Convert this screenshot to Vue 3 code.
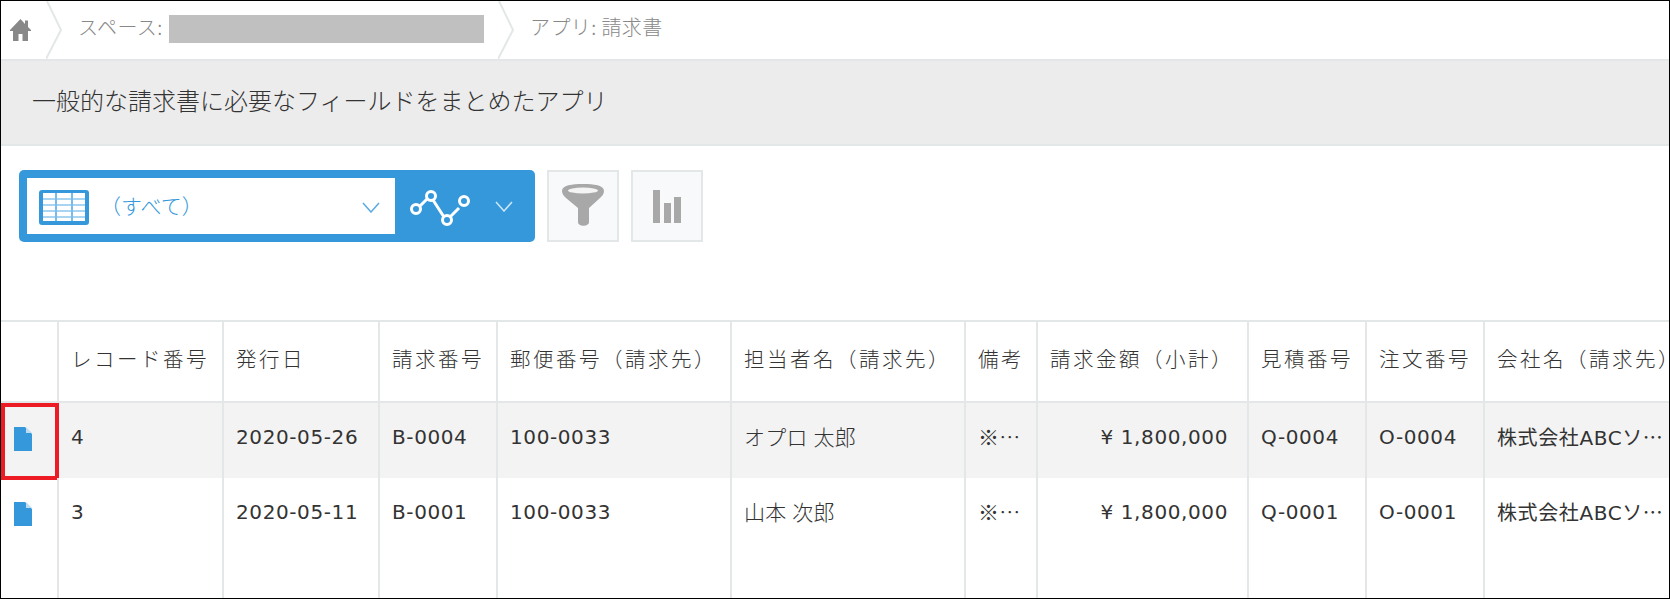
<script setup>
const heads = [
  { t: '', w: 58 }, { t: 'レコード番号', w: 165 }, { t: '発行日', w: 156 }, { t: '請求番号', w: 118 },
  { t: '郵便番号（請求先）', w: 234 }, { t: '担当者名（請求先）', w: 234 }, { t: '備考', w: 72 },
  { t: '請求金額（小計）', w: 211 }, { t: '見積番号', w: 118 }, { t: '注文番号', w: 118 }, { t: '会社名（請求先）', w: 200 }
]
const rows = [
  { id: '4', date: '2020-05-26', inv: 'B-0004', zip: '100-0033', name: 'オプロ 太郎', q: 'Q-0004', o: 'O-0004', active: true },
  { id: '3', date: '2020-05-11', inv: 'B-0001', zip: '100-0033', name: '山本 次郎', q: 'Q-0001', o: 'O-0001', active: false }
]
</script>

<template>
  <div class="frame">
    <nav class="crumbs">
      <svg class="home" viewBox="0 0 21 22" width="21" height="22"><path d="M10.5 0L0 11v1h3v10h5.5v-7h4v7H18V12h3v-1l-3-3V1.500h-3V5z" fill="#888"/></svg>
      <svg class="sep sep-a" viewBox="0 0 16 58" width="16" height="58"><path d="M1 0l14 29L0 58" fill="none" stroke="#e3e7e8" stroke-width="2"/></svg>
      <span class="crumb crumb-space">スペース:</span>
      <span class="masked"></span>
      <svg class="sep sep-b" viewBox="0 0 16 58" width="16" height="58"><path d="M1 0l14 29L0 58" fill="none" stroke="#e3e7e8" stroke-width="2"/></svg>
      <span class="crumb crumb-app">アプリ: 請求書</span>
    </nav>

    <div class="band">一般的な請求書に必要なフィールドをまとめたアプリ</div>

    <div class="toolbar">
      <div class="viewbar">
        <div class="select">
          <svg class="grid" viewBox="0 0 50 35" width="50" height="35">
            <rect width="50" height="35" rx="3" fill="#3498db"/>
            <rect x="4" y="3" width="42" height="28" fill="#fff"/>
            <g fill="#a9d5f3">
              <rect x="4" y="8" width="42" height="2"/><rect x="4" y="14" width="42" height="2"/><rect x="4" y="20" width="42" height="2"/><rect x="4" y="26" width="42" height="2"/>
            </g>
            <g fill="#79bbea">
              <rect x="16" y="3" width="2" height="28"/><rect x="32" y="3" width="2" height="28"/>
            </g>
          </svg>
          <span class="select-text">（すべて）</span>
          <svg class="chev" viewBox="0 0 18 11" width="18" height="11"><path d="M1 1l8 9 8-9" fill="none" stroke="#5aaae3" stroke-width="1.500"/></svg>
        </div>
        <svg class="graph" viewBox="0 0 62 38" width="62" height="38">
          <path d="M10 16L17 9M23 10l11 17M40 27l9-9" stroke="#fff" stroke-width="3" fill="none"/>
          <g fill="none" stroke="#fff" stroke-width="3">
            <circle cx="6" cy="19" r="4.500"/><circle cx="21" cy="6" r="4.500"/><circle cx="37" cy="30" r="4.500"/><circle cx="54" cy="11" r="4.500"/>
          </g>
        </svg>
        <svg class="chev chev-w" viewBox="0 0 18 11" width="18" height="11"><path d="M1 1l8 9 8-9" fill="none" stroke="#cfe6f7" stroke-width="1.500"/></svg>
      </div>
      <button class="tool">
        <svg class="funnel" viewBox="0 0 42 42" width="42" height="42">
          <path d="M0 7C0 1 10 0 21 0s21 1 21 7c0 3-2 5-4 7L27 24v14c0 5-11 5-11 0V24L4 14C2 12 0 10 0 7z" fill="#a8a8a8"/>
          <ellipse cx="21" cy="6.500" rx="15" ry="3" fill="#f4f4f4"/>
        </svg>
      </button>
      <button class="tool">
        <svg viewBox="0 0 28 33" width="28" height="33" class="bars">
          <rect x="0" y="0" width="7" height="33" fill="#a8a8a8"/>
          <rect x="11" y="13" width="7" height="20" fill="#a8a8a8"/>
          <rect x="21" y="7" width="7" height="26" fill="#a8a8a8"/>
        </svg>
      </button>
    </div>

    <div class="table-wrap">
      <table>
        <colgroup><col v-for="h in heads" :key="h.t" :style="{ width: h.w + 'px' }"></colgroup>
        <thead>
          <tr><th v-for="h in heads" :key="h.t">{{ h.t }}</th></tr>
        </thead>
        <tbody>
          <tr v-for="r in rows" :key="r.id" :class="{ active: r.active }">
            <td class="doc">
              <svg viewBox="0 0 18 24" width="18" height="24">
                <path d="M0 0h11l7 7v17H0z" fill="#3498db"/>
                <path d="M12 0l6 6h-6z" fill="#bcdcf3"/>
              </svg>
              <span v-if="r.active" class="mark"></span>
            </td>
            <td>{{ r.id }}</td>
            <td>{{ r.date }}</td>
            <td>{{ r.inv }}</td>
            <td>{{ r.zip }}</td>
            <td class="ja">{{ r.name }}</td>
            <td class="ja">※…</td>
            <td class="num">¥ 1,800,000</td>
            <td>{{ r.q }}</td>
            <td>{{ r.o }}</td>
            <td class="company">株式会社ABCソ<span class="dots">…</span></td>
          </tr>
        </tbody>
      </table>
    </div>
  </div>
</template>

<style>
html, body { margin: 0; background: #fff; }
</style>

<style scoped>
.frame {
  width: 1670px;
  height: 599px;
  box-sizing: border-box;
  border: 1px solid #000;
  overflow: hidden;
  display: flex;
  flex-direction: column;
  background: #fff;
  font-family: "Noto Sans CJK JP", sans-serif;
  font-weight: 300;
  color: #333;
}
.crumbs {
  height: 58px;
  flex: none;
  border-bottom: 2px solid #e3e7e8;
  display: flex;
  align-items: center;
  color: #888;
  font-size: 20px;
}
.home { margin-left: 9px; flex: none; }
.sep { flex: none; }
.sep-a { margin-left: 15px; margin-right: 16px; }
.sep-b { margin-left: 14px; margin-right: 16px; }
.crumb { white-space: nowrap; line-height: 30px; margin-top: -7px; }
.crumb-space { width: 91px; letter-spacing: 0.4px; }
.crumb-app { letter-spacing: 0.4px; }
.masked { width: 315px; height: 28px; background: #c0c0c0; flex: none; margin-top: -2px; }
.band {
  height: 83px;
  flex: none;
  background: #ececec;
  border-bottom: 2px solid #e3e7e8;
  padding-left: 31px;
  font-size: 24px;
  line-height: 78px;
  color: #333;
  white-space: nowrap;
}
.toolbar {
  flex: none;
  height: 72px;
  margin: 24px 0 0 18px;
  display: flex;
  gap: 12px;
}
.viewbar {
  width: 516px;
  box-sizing: border-box;
  background: #3498db;
  border-radius: 5px;
  padding: 8px;
  display: flex;
  align-items: center;
}
.select {
  width: 368px;
  height: 56px;
  background: #fff;
  display: flex;
  align-items: center;
  flex: none;
}
.grid { margin-left: 12px; margin-top: 2px; flex: none; }
.select-text {
  color: #3498db;
  font-size: 21px;
  margin-left: 11px;
  margin-top: -3px;
  width: 262px;
  white-space: nowrap;
}
.chev { flex: none; }
.select .chev { margin-top: 3px; }
.graph { margin-left: 15px; margin-top: 6px; flex: none; }
.chev-w { margin-left: 23px; }
.tool {
  width: 72px;
  height: 72px;
  box-sizing: border-box;
  background: #f7f9fa;
  border: 2px solid #e3e7e8;
  padding: 0;
  display: flex;
  align-items: center;
  justify-content: center;
}
.funnel { margin-top: -2px; }
.table-wrap { margin-top: 78px; flex: 1; overflow: hidden; }
table {
  table-layout: fixed;
  width: 1684px;
  border-collapse: separate;
  border-spacing: 0;
}
th, td {
  box-sizing: border-box;
  border-right: 2px solid #e3e7e8;
  vertical-align: top;
  text-align: left;
  line-height: 30px;
  white-space: nowrap;
}
th {
  height: 83px;
  border-top: 2px solid #e3e7e8;
  border-bottom: 2px solid #e3e7e8;
  font-size: 20.500px;
  font-weight: 300;
  padding: 21px 0 0 12px;
  letter-spacing: 2.500px;
  overflow: hidden;
}
td {
  height: 75px;
  padding: 19px 8px 0 12px;
  font-family: "DejaVu Sans", "Noto Sans CJK JP", sans-serif;
  font-size: 20px;
  font-weight: 400;
  letter-spacing: 0.6px;
  color: #333;
}
tbody tr:last-child td { height: 120px; }
.active td { background: #f3f3f3; }
td.ja {
  font-family: "Noto Sans CJK JP", sans-serif;
  font-size: 21px;
  font-weight: 300;
  letter-spacing: 0.2px;
  word-spacing: 1px;
  padding-top: 18px;
}
.dots { font-family: "Noto Sans CJK JP", sans-serif; letter-spacing: 0; }
td.num { text-align: right; padding-right: 19px; }
td.doc { position: relative; padding: 24px 0 0 13px; }
.doc svg { display: block; }
.mark {
  position: absolute;
  top: 0;
  left: 0;
  right: -2px;
  bottom: -2px;
  border: 4px solid #ed1c24;
  box-sizing: border-box;
}
.company { overflow: hidden; }
</style>
